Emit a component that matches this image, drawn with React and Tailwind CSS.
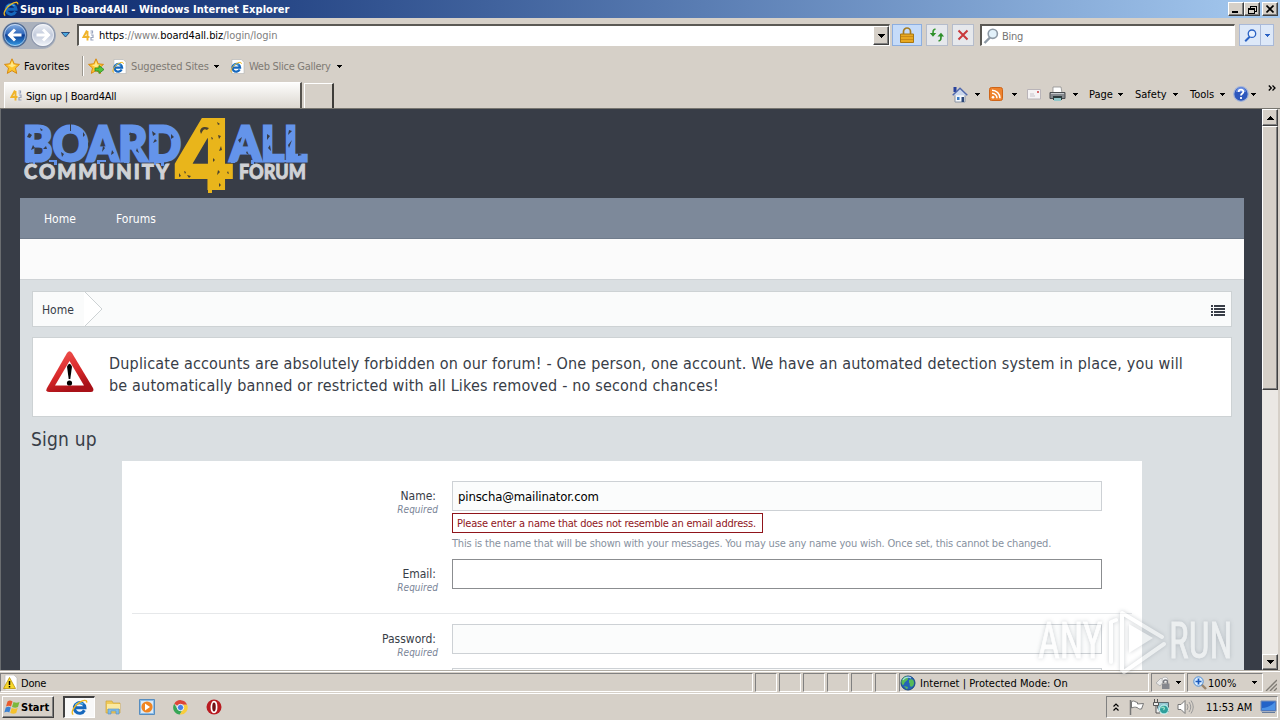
import { clsx } from "clsx";

const sunken = "border border-t-[#808080] border-l-[#808080] border-b-white border-r-white";
const raised =
    "bg-[#d6d0c8] border border-t-white border-l-white border-b-[#404040] border-r-[#404040] shadow-[inset_-1px_-1px_0_#808080]";

function Caret({ className }) {
    return (
        <svg className={clsx("shrink-0", className)} width="5" height="3" viewBox="0 0 5 3" shapeRendering="crispEdges">
            <path d="M0 0h5v1H4v1H3v1H2V2H1V1H0z" fill="currentColor" />
        </svg>
    );
}

function Arrow({ up }) {
    return (
        <svg width="7" height="4" viewBox="0 0 7 4" shapeRendering="crispEdges">
            <path d={up ? "M3 0h1v1h1v1h1v1h1v1H0V3h1V2h1V1h1z" : "M0 0h7v1H6v1H5v1H4v1H3V3H2V2H1V1H0z"} fill="#000" />
        </svg>
    );
}

function IeIcon({ size = 16, page }) {
    return (
        <svg className="shrink-0" width={size} height={size} viewBox="0 0 16 16">
            {page && <path d="M2 .5h10l3 3v12H2z" fill="#fff" stroke="#b4b4b4" strokeWidth=".7" />}
            <g transform={page ? "translate(0 2.5) scale(.82)" : undefined}>
                <path d="M12.6 10.6a5 5 0 1 1 .5-2.4H4.4" fill="none" stroke="#1668bd" strokeWidth="2.9" />
                <path d="M4 5.6a5 5 0 0 1 7.5-.7" fill="none" stroke="#55b7ee" strokeWidth="1.2" />
                <path d="M2.2 14.6C-.8 13 3 6.500 8 3.200 11.500.9 15.300.3 14.700 3.400" fill="none" stroke="#efb81e" strokeWidth="1.3" />
            </g>
        </svg>
    );
}

function SiteIcon() {
    return (
        <svg className="shrink-0" width="13" height="13" viewBox="0 0 13 13">
            <path d="M5 1.500 1.500 8H7.500M5.500 2v9.500" fill="none" stroke="#f0b429" strokeWidth="1.900" />
            <path d="M8.500 2h2v2h-2M9 6h2v2.500H9V11h2.500" fill="none" stroke="#9aa4bd" strokeWidth="1.200" />
        </svg>
    );
}

function Star({ add }) {
    return (
        <svg className="shrink-0" width="17" height="17" viewBox="0 0 17 17">
            <path d="m8 .8 2.200 5 5.300.6-4 3.600 1.200 5.400L8 12.600l-4.700 2.800L4.500 10l-4-3.600 5.300-.6z" fill="#fdc52c" stroke="#d78a13" />
            <path d="m8 3 1.300 3.600 3 .4L8 9.500 3.800 7l3-.4z" fill="#ffe88a" />
            {add && <path d="M7 10h4V7.500l5 4-5 4V13H7z" fill="#54c43b" stroke="#2b8c22" strokeWidth=".8" />}
        </svg>
    );
}

function NavCircle({ forward }) {
    return (
        <svg width="26" height="26" viewBox="0 0 26 26">
            <defs>
                <linearGradient id="navBack" x2="0" y2="1">
                    <stop offset="0" stopColor="#8db4e6" />
                    <stop offset=".45" stopColor="#2f68bb" />
                    <stop offset=".5" stopColor="#0b3c92" />
                    <stop offset="1" stopColor="#38a2ea" />
                </linearGradient>
                <linearGradient id="navForward" x2="0" y2="1">
                    <stop offset="0" stopColor="#eef1f7" />
                    <stop offset=".5" stopColor="#c3cbdc" />
                    <stop offset="1" stopColor="#f5f8fc" />
                </linearGradient>
            </defs>
            <circle cx="13" cy="13" r="11.700" fill={forward ? "url(#navForward)" : "url(#navBack)"} stroke={forward ? "#8f99ad" : "#50698f"} strokeWidth="1.200" />
            <circle cx="13" cy="13" r="10.500" fill="none" stroke="#fff" strokeOpacity=".55" />
            <path
                d={forward ? "M6.500 13h12M13 7.500l5.500 5.500-5.500 5.500" : "M19.500 13h-12M13 7.500 7.500 13l5.500 5.500"}
                fill="none"
                stroke="#fff"
                strokeWidth="3"
            />
        </svg>
    );
}

function Magnifier({ color = "#2a62c4", lens = "#e7f1ff", size = 16 }) {
    return (
        <svg className="shrink-0" width={size} height={size} viewBox="0 0 16 16">
            <path d="M7 9.500 1.500 15" stroke={color} strokeWidth="2.400" />
            <circle cx="9.800" cy="5.800" r="4.600" fill={lens} stroke={color} strokeWidth="1.600" />
        </svg>
    );
}

function TitleBar() {
    return (
        <div className="flex h-[18px] items-center bg-linear-to-r from-[#0a246a] to-[#a6caf0] pr-[2px] pl-[3px]">
            <IeIcon />
            <span className="ml-[1px] flex-1 pt-[2px] text-[11px] font-bold tracking-[0.04px] text-white">
                Sign up | Board4All - Windows Internet Explorer
            </span>
            <div className="flex text-black">
                <span className={clsx(raised, "flex h-[14px] w-4 items-end justify-center pb-[2px]")}>
                    <i className="mr-[2px] h-[2px] w-[6px] bg-black" />
                </span>
                <span className={clsx(raised, "mr-[2px] flex h-[14px] w-4 items-center justify-center")}>
                    <svg width="9" height="9" viewBox="0 0 9 9" shapeRendering="crispEdges">
                        <path d="M2.500 3V1h6v5H7M2 1.500h7M.5 3.500h6v5h-6zM0 4h7" fill="none" stroke="#000" />
                    </svg>
                </span>
                <span className={clsx(raised, "flex h-[14px] w-4 items-center justify-center")}>
                    <svg width="8" height="8" viewBox="0 0 8 8">
                        <path d="m.5.500 7 7m0-7-7 7" stroke="#000" strokeWidth="1.600" />
                    </svg>
                </span>
            </div>
        </div>
    );
}

function NavRow() {
    return (
        <div className="flex h-[34px] items-center pl-[2px]">
            <div className="flex h-[27px] w-[54px] items-center justify-between rounded-full bg-[#aab1bd]">
                <NavCircle />
                <NavCircle forward />
            </div>
            <svg className="mr-[7px] ml-[5px]" width="9" height="6" viewBox="0 0 9 6">
                <path d="M.5.500h8L4.500 5z" fill="#4aa7df" stroke="#1f3f70" strokeWidth=".9" />
            </svg>
            <div className="flex h-[22px] w-[813px] items-center border border-t-2 border-l-2 border-t-[#5b5954] border-r-white border-b-white border-l-[#5b5954] bg-white pl-[3px]">
                <SiteIcon />
                <span className="ml-[4px] flex-1 pt-[2px] text-[11px] tracking-[-0.06px] text-[#808080]">
                    <span className="text-black">https</span>://www.<span className="text-black">board4all.biz</span>/login/login
                </span>
                <span className={clsx(raised, "flex h-[19px] w-4 items-center justify-center")}>
                    <Arrow />
                </span>
            </div>
            <span className="ml-[2px] flex h-[22px] w-[30px] items-center justify-center border border-[#8caee0] bg-[#c5dbf9]">
                <svg width="14" height="16" viewBox="0 0 14 16">
                    <path d="M3.500 7V4.500a3.500 3.500 0 0 1 7 0V7" fill="none" stroke="#a57c22" strokeWidth="1.700" />
                    <path d="M.5 7h13v8.500H.5z" fill="#e8a820" stroke="#a87713" />
                    <path d="M1 9.500h12M1 12.500h12" stroke="#c98a18" />
                </svg>
            </span>
            <span className="ml-[4px] flex h-[22px] w-[22px] items-center justify-center border border-[#b5bccb] bg-[#e6e8ec]">
                <svg width="16" height="14" viewBox="0 0 16 14">
                    <path d="M6.500 1C4 1.500 4 3 4 6" fill="none" stroke="#3a9a34" strokeWidth="1.700" />
                    <path d="M.8 5h6.400L4 8.800zM8.500 8.500h6.600L12 4.800z" fill="#2f8f2a" />
                    <path d="M9.500 13c2.500-.5 2.500-2 2.500-5" fill="none" stroke="#2f8f2a" strokeWidth="1.700" />
                </svg>
            </span>
            <span className="ml-[4px] flex h-[22px] w-[22px] items-center justify-center border border-[#b5bccb] bg-[#e6e8ec]">
                <svg width="12" height="12" viewBox="0 0 12 12">
                    <path d="m1.500 1.500 9 9m0-9-9 9" stroke="#c9393c" strokeWidth="2" />
                </svg>
            </span>
            <div className="ml-[6px] flex h-[22px] w-[255px] items-center border border-t-2 border-l-2 border-t-[#5b5954] border-r-white border-b-white border-l-[#5b5954] bg-white pl-[1px]">
                <Magnifier color="#8e9aa6" lens="#e2f1fa" />
                <span className="ml-[3px] pt-[3px] text-[11px] tracking-[-0.3px] text-[#757575]">Bing</span>
            </div>
            <div className="ml-[4px] flex h-[22px] w-[35px] border border-[#a9b9d8] bg-[#dde8f8] text-[#2a62c4]">
                <span className="flex w-[21px] items-center justify-center border-r border-[#a9b9d8]">
                    <Magnifier size={13} />
                </span>
                <span className="flex flex-1 items-center justify-center">
                    <Caret />
                </span>
            </div>
        </div>
    );
}

function FavoritesRow() {
    return (
        <div className="flex h-[28px] items-center pl-[4px] text-[11px]">
            <Star />
            <span className="ml-[3px] w-[58px] pt-[2px] tracking-[0.1px] text-black">Favorites</span>
            <i className="h-5 w-px bg-[#9b978f]" />
            <i className="mr-[4px] h-5 w-px bg-white" />
            <Star add />
            <span className="ml-[7px]">
                <IeIcon page size={15} />
            </span>
            <span className="ml-[4px] w-[83px] pt-[2px] tracking-[-0.15px] whitespace-nowrap text-[#7e7a74]">Suggested Sites</span>
            <Caret />
            <span className="ml-[11px]">
                <IeIcon page size={15} />
            </span>
            <span className="ml-[4px] w-[88px] pt-[2px] tracking-[-0.28px] whitespace-nowrap text-[#7e7a74]">Web Slice Gallery</span>
            <Caret />
        </div>
    );
}

function HouseIcon() {
    return (
        <svg width="16" height="17" viewBox="0 0 16 17">
            <path d="M3 8h10v8H3z" fill="#f4f7fb" stroke="#8a93a3" />
            <path d="M1.500 1h3v5h-3z" fill="#28419c" />
            <path d="m.7 9.200 7.300-7 7.300 7" fill="#ccd8ec" stroke="#5068ac" strokeWidth="1.500" />
            <path d="M5 11h2.500v3H5z" fill="#3c7cc6" />
            <path d="M9.500 11H12v5H9.500z" fill="#2c4778" />
        </svg>
    );
}

function RssIcon() {
    return (
        <svg width="14" height="14" viewBox="0 0 14 14">
            <rect x=".5" y=".5" width="13" height="13" rx="2" fill="#ee822d" stroke="#cf6518" />
            <circle cx="4" cy="10.300" r="1.300" fill="#fff" />
            <path d="M3 6.300a5 5 0 0 1 5 5M3 3.200a8 8 0 0 1 8 8" fill="none" stroke="#fff" strokeWidth="1.500" />
        </svg>
    );
}

function MailIcon() {
    return (
        <svg width="14" height="11" viewBox="0 0 14 11">
            <path d="M.5.500h13v9.500H.5z" fill="#f5f3f4" stroke="#b9b4b8" />
            <path d="M3 5h4M3 7h5" stroke="#c7c3ca" />
            <path d="M10 2h2v2h-2z" fill="#d5696c" />
        </svg>
    );
}

function PrinterIcon() {
    return (
        <svg width="17" height="16" viewBox="0 0 17 16">
            <path d="M4 1h8l1 6H4z" fill="#fff" stroke="#8e8e8e" strokeWidth=".8" />
            <path d="M1 6.500h15v6H1z" fill="#85898e" stroke="#4a4d50" />
            <path d="M4 10h9v4H4z" fill="#2b3b3c" />
            <path d="M5 12h7v3H5z" fill="#92c8cb" />
            <path d="M2 7.500h13" stroke="#c6cacd" />
        </svg>
    );
}

function HelpIcon() {
    return (
        <svg width="16" height="16" viewBox="0 0 16 16">
            <circle cx="8" cy="8" r="7.300" fill="#2d57bd" stroke="#a5b5d8" strokeWidth="1.200" />
            <path d="M3 6a5 5 0 0 1 10 0" fill="#668be0" />
            <path d="M5.700 6c0-3 4.700-3 4.700-.2C10.400 7.500 8 7.500 8 9.500M8 11v2" fill="none" stroke="#fff" strokeWidth="1.800" />
        </svg>
    );
}

function TabRow() {
    return (
        <div className="flex h-[28px] items-end pl-[4px] text-[11px] text-black">
            <div className="flex h-[26px] w-[298px] items-center border-t border-r-2 border-l border-t-white border-r-[#55524d] border-l-white bg-linear-to-b from-[#fdfdfc] to-[#dcd7d0] pl-[5px]">
                <SiteIcon />
                <span className="ml-[3px] pt-[3px] tracking-[-0.22px]">Sign up | Board4All</span>
            </div>
            <div className="ml-[2px] h-[25px] w-[30px] border-t border-r-2 border-l border-t-white border-r-[#3e3c39] border-l-white" />
            <div className="ml-auto flex h-full items-center">
                <span className="w-[23px]"><HouseIcon /></span>
                <span className="w-[14px]"><Caret /></span>
                <span className="w-[23px]"><RssIcon /></span>
                <span className="w-[15px]"><Caret /></span>
                <span className="w-[22px]"><MailIcon /></span>
                <span className="w-[24px]"><PrinterIcon /></span>
                <span className="w-[16px]"><Caret /></span>
                <span className="w-[29px] pt-[2px]">Page</span>
                <span className="w-[17px]"><Caret /></span>
                <span className="w-[38px] pt-[2px]">Safety</span>
                <span className="w-[17px]"><Caret /></span>
                <span className="w-[30px] pt-[2px]">Tools</span>
                <span className="w-[13px]"><Caret /></span>
                <span className="w-[18px]"><HelpIcon /></span>
                <span className="w-[17px]"><Caret /></span>
                <svg className="mr-[4px] mb-[12px]" width="8" height="6" viewBox="0 0 8 6">
                    <path d="m.8.500 2.500 2.500L.8 5.500M4.500.500 7 3 4.500 5.500" fill="none" stroke="#000" strokeWidth="1.300" />
                </svg>
            </div>
        </div>
    );
}

function Logo() {
    return (
        <svg width="306" height="89" viewBox="22 109 306 89">
            <g fontFamily="Lato, sans-serif" fontWeight="900">
                <g fill="#6494ea" stroke="#6494ea" strokeWidth="3" fontSize="48">
                    <text x="23" y="160.500" textLength="158" lengthAdjust="spacingAndGlyphs">BOARD</text>
                    <text x="230" y="160.500" textLength="77" lengthAdjust="spacingAndGlyphs">ALL</text>
                </g>
                <g fill="#d0d2d6" stroke="#d0d2d6" strokeWidth=".9" fontSize="20">
                    <text x="24" y="179" textLength="145" lengthAdjust="spacing">COMMUNITY</text>
                    <text x="239" y="179" textLength="67" lengthAdjust="spacingAndGlyphs">FORUM</text>
                </g>
                <text x="171" y="190" textLength="65" lengthAdjust="spacingAndGlyphs" fontFamily="Inter, sans-serif" fontSize="99" fill="#e9b51b">4</text>
            </g>
            <path
                d="M26 160v3h3v-2h4v3h2v-4zM49 160v2h5v3h3v-5zM97 160v4h3v-2h6v-2zM124 160v3h5v-3zM154 160v5h2v-2h5v3h3v-6zM231 160v3h4v-3zM251 160v4h3v-4zM283 160v2h8v-2zM295 160v2h9v-2z"
                fill="#6494ea"
            />
            <path d="M208 185v8h4v-5h4v-3zM218 185v5h7v-5z" fill="#e9b51b" />
            <path
                d="M29 133l3 2-2 3-3-1zM33 145l2 3-4 2zM40 128l3 2-2 1zM43 149l3-3 1 3zM61 152l3 2-2 3zM70 123h1v8h-1zM83 132l2 3-2 2zM88 142l2 2-2 3zM105 148l-3 4 1-6zM112 150l2 3-3 2zM130 132l2 3h-3zM137 148l2 5-3-2zM152 131l4 3-3 2zM155 139l2 2-4 2zM161 149l2 4-3-1zM171 134l3 3-3 2zM238 140l4-3-2 6zM247 151l2 4-3-2zM267 134l3 2-3 4zM270 145l1 6-3-3zM289 130l3 1-4 4zM292 140l-3 8-1-3zM298 153l4 2-4 1z"
                fill="#383d47"
            />
            <path
                d="M200 131c1-4 4-5 9-3l-2 2c-4-2-4 1-6 4zM217 122l3 2-2 1zM218 135l3 1-2 3zM221 146l1 4-3 1zM211 137l2 1-1 2zM179 173l2 3-2 1zM184 171l2 1-1 2zM187 175l4 1-2 2zM213 158l2 2-2 2zM218 170l2 2-3 3zM228 171l1 3-2-1zM219 183l2 2-2 2z"
                fill="#4b4230"
            />
        </svg>
    );
}

function WarningSign() {
    return (
        <svg className="shrink-0" width="50" height="44" viewBox="0 0 50 44">
            <defs>
                <linearGradient id="warn" x2=".4" y2="1">
                    <stop offset="0" stopColor="#f45a55" />
                    <stop offset=".6" stopColor="#d92a2b" />
                    <stop offset="1" stopColor="#a91118" />
                </linearGradient>
            </defs>
            <path d="M22 3q2.500-3.500 5 0l21 35q1.500 3.800-2 4H4q-4-.2-2-4z" fill="url(#warn)" />
            <path d="M24.500 11 10 35.500h29z" fill="#fff" />
            <path d="M22 16.500q2.500-5.500 5 0L25.300 29h-1.600z" fill="#000" />
            <circle cx="24.500" cy="33" r="2.600" fill="#000" />
        </svg>
    );
}

function Field({ label, className, inputClass, value, children }) {
    return (
        <div className={clsx("flex", className)}>
            <div className="w-[316px] shrink-0 pt-[8px] text-right">
                <div className="pr-[2px] text-[12px] leading-[14px] text-[#383d47]">{label}:</div>
                <div className="text-[10px] leading-[13px] text-[#7a8597] italic">Required</div>
            </div>
            <div className="ml-[14px] w-[650px]">
                <div className={clsx("flex h-[30px] items-center border pt-[2px] pl-[5px] text-[13px] tracking-[-0.14px] text-black", inputClass)}>
                    {value}
                </div>
                {children}
            </div>
        </div>
    );
}

function Page() {
    return (
        <div className="h-full flex-1 overflow-hidden border-l border-[#6a6d70] bg-[#383d47] pr-[18px] pl-[19px]">
            <div className="h-[89px] pl-[2px]">
                <Logo />
            </div>
            <div className="flex h-[41px] items-center border-b border-[#707c8c] bg-[#7d899a] pt-[2px] pl-6 text-[12px] text-white">
                <span className="w-[72px]">Home</span>
                <span>Forums</span>
            </div>
            <div className="h-[41px] border-b border-[#cfd3d6] bg-[#fbfbfb]" />
            <div className="bg-[#dadfe2] px-3 pt-[11px]">
                <div className="flex h-[36px] items-center border border-[#cdd2d4] bg-[#fafbfb] pl-[9px]">
                    <span className="w-[42px] pt-[2px] text-[12px] text-[#383d47]">Home</span>
                    <svg width="18" height="34" viewBox="0 0 18 34">
                        <path d="M0 0h1l17 17L1 34H0" fill="#fff" />
                        <path d="m1 0 17 17L1 34" fill="none" stroke="#cdd2d4" />
                    </svg>
                    <svg className="mt-[2px] mr-[6px] ml-auto" width="14" height="11" viewBox="0 0 14 11" shapeRendering="crispEdges">
                        <path d="M0 0h2v2H0zm3 0h11v2H3zM0 3h2v2H0zm3 0h11v2H3zM0 6h2v2H0zm3 0h11v2H3zM0 9h2v2H0zm3 0h11v2H3z" fill="#383d47" />
                    </svg>
                </div>
                <div className="mt-[10px] flex h-[80px] border border-[#cdd2d4] bg-white pt-[12px] pl-[12px]">
                    <WarningSign />
                    <p className="ml-[14px] pt-[3px] text-[16px] leading-[22px] tracking-[0.175px] whitespace-nowrap text-[#383d47]">
                        Duplicate accounts are absolutely forbidden on our forum! - One person, one account. We have an automated detection system in place, you will
                        <br />
                        be automatically banned or restricted with all Likes removed - no second chances!
                    </p>
                </div>
                <h1 className="-ml-[1px] h-[44px] pt-[10px] text-[19px] leading-[24px] tracking-[0.2px] text-[#383d47]">Sign up</h1>
                <div className="mx-[90px] h-[220px] bg-white pt-[20px]">
                    <Field label="Name" className="h-[78px]" inputClass="border-[#cdd1d5] bg-[#fbfcfc]" value="pinscha@mailinator.com">
                        <div className="mt-[2px] flex h-[20px] w-[311px] items-center border border-[#90151b] bg-white pt-[2px] pl-[4px] text-[11px] tracking-[-0.21px] whitespace-nowrap text-[#90151b]">
                            Please enter a name that does not resemble an email address.
                        </div>
                        <div className="mt-[4px] text-[11px] leading-[14px] tracking-[-0.185px] whitespace-nowrap text-[#8791a0]">
                            This is the name that will be shown with your messages. You may use any name you wish. Once set, this cannot be changed.
                        </div>
                    </Field>
                    <Field label="Email" className="h-[54px]" inputClass="border-[#8b8d90] bg-white" />
                    <div className="mx-[10px] mb-[10px] h-px bg-[#e6e8ea]" />
                    <Field label="Password" className="h-[44px]" inputClass="border-[#cdd1d5] bg-[#fbfcfc]" />
                    <div className="ml-[330px] h-[30px] w-[650px] border border-[#cdd1d5] bg-[#fbfcfc]" />
                </div>
            </div>
        </div>
    );
}

function ScrollBar() {
    return (
        <div className="mr-[2px] flex w-4 flex-col justify-between bg-[#ebe8e4]">
            <div>
                <div className={clsx(raised, "flex h-[17px] items-center justify-center")}>
                    <Arrow up />
                </div>
                <div className={clsx(raised, "h-[264px]")} />
            </div>
            <div className={clsx(raised, "flex h-[16px] items-center justify-center")}>
                <Arrow />
            </div>
        </div>
    );
}

function StatusBar() {
    return (
        <div className="flex h-[23px] items-center gap-[2px] border-t border-[#b3aea6] pt-px text-[11px] text-black shadow-[inset_0_1px_0_#fff]">
            <div className={clsx(sunken, "flex h-[19px] w-[753px] items-center pl-[2px]")}>
                <svg width="15" height="15" viewBox="0 0 15 15">
                    <path d="M2 0h9l3 3v12H2z" fill="#fff" stroke="#b7b7b7" strokeWidth=".6" />
                    <path d="m6.500 2.500 6 11H.5z" fill="#f8d829" stroke="#b9930a" strokeWidth=".8" />
                    <path d="M6.500 6v4m0 1v1.500" stroke="#000" strokeWidth="1.500" />
                </svg>
                <span className="ml-[3px] pt-[3px] tracking-[-0.2px]">Done</span>
            </div>
            {[1, 2, 3, 4, 5, 6].map((n) => (
                <div key={n} className={clsx(sunken, "h-[19px] w-[22px]")} />
            ))}
            <div className={clsx(sunken, "flex h-[19px] w-[250px] items-center")}>
                <svg width="16" height="16" viewBox="0 0 16 16">
                    <circle cx="8" cy="8" r="7" fill="#2463b7" stroke="#174780" />
                    <path d="M3 3c3-3 6-1 5 1S5 6 4 9 1 8 1.500 6zM9 5c3-2 5 0 5 3s-3 5-4 3 1-2-1-3zM4 11l4 1-1 2.500z" fill="#58bb58" />
                    <path d="M3 5a6 6 0 0 1 8-2" fill="none" stroke="#a8d8f4" strokeWidth="1.300" />
                </svg>
                <span className="ml-[4px] pt-[3px] tracking-[0.03px]">Internet | Protected Mode: On</span>
            </div>
            <div className={clsx(sunken, "flex h-[19px] w-[34px] items-center pl-[3px]")}>
                <svg width="17" height="14" viewBox="0 0 17 14">
                    <path d="m1 7 5-5 3 3-4 5z" fill="#e9e9e9" stroke="#b4b4b4" />
                    <circle cx="10" cy="4" r="3" fill="#f5f5f5" stroke="#bdbdbd" />
                    <path d="M8.500 7V6a2 2 0 0 1 4 0v2" fill="none" stroke="#77797f" strokeWidth="1.400" />
                    <path d="M7 7.500h7.500V13H7z" fill="#85878d" />
                </svg>
                <Caret className="ml-[4px]" />
            </div>
            <div className={clsx(sunken, "flex h-[19px] w-[76px] items-center pl-[5px]")}>
                <svg width="14" height="14" viewBox="0 0 14 14">
                    <path d="m8 8 5 5" stroke="#9a856d" strokeWidth="2.400" />
                    <circle cx="5.500" cy="5.500" r="4.700" fill="#d9ecff" stroke="#4e8cd2" />
                    <path d="M5.500 2.500v6m-3-3h6" stroke="#1b59bb" strokeWidth="1.700" />
                </svg>
                <span className="ml-px w-[44px] pt-[3px]">100%</span>
                <Caret />
            </div>
            <svg className="mt-[5px]" width="12" height="12" viewBox="0 0 12 12">
                <path d="M1 12 12 1M5 12l7-7M9 12l3-3" stroke="#817d76" strokeWidth="1.400" />
            </svg>
        </div>
    );
}

function TaskBar() {
    return (
        <div className="flex h-[27px] items-center border-t border-white pr-[2px] pl-[2px] text-[11px] text-black">
            <div className={clsx(raised, "flex h-[22px] w-[52px] items-center pl-[1px]")}>
                <svg width="17" height="16" viewBox="0 0 17 16">
                    <path d="M3.500 2.500C5.500 1 7 1.500 8.500 2.500L7 7.500C5.500 6.500 4 6.500 2 7.500z" fill="#e95b2d" />
                    <path d="M9.500 3c2 1 4 1 6 0L14 8c-2 1-4 .7-6 0z" fill="#7cb83c" />
                    <path d="M1.800 8.500c2-1 3.500-1 5 0l-1.500 5c-1.500-1-3-1-5 0z" fill="#3c82d2" />
                    <path d="M7.700 9c2 1 4 1 6 0l-1.500 5c-2 1-4 .7-6 0z" fill="#f5c12c" />
                </svg>
                <span className="pt-[2px] text-[11px] font-bold">Start</span>
            </div>
            <div className="ml-[9px] flex h-[22px] w-[32px] items-center justify-center border border-t-2 border-l-2 border-t-[#404040] border-r-white border-b-white border-l-[#404040] bg-[#f8f8f8]">
                <IeIcon size={17} />
            </div>
            <svg className="ml-[10px]" width="17" height="16" viewBox="0 0 17 16">
                <path d="M1 2h6l1 2h7v10H1z" fill="#f0ca58" stroke="#cda53b" strokeWidth=".7" />
                <path d="M2 5h13v5H2z" fill="#fbe9a0" />
                <path d="M3 15v-5h11v5h-3v-3H6v3z" fill="#80bce7" stroke="#568fc2" strokeWidth=".6" />
            </svg>
            <svg className="ml-[17px]" width="16" height="16" viewBox="0 0 16 16">
                <path d="M.5.500h15v15H.5z" fill="#8cbde9" stroke="#578dbf" />
                <path d="M2 2h12v12H2z" fill="#dceaf6" />
                <circle cx="8" cy="8" r="5.600" fill="#f08522" />
                <path d="m6 4.500 5 3.500-5 3.500z" fill="#fff" />
            </svg>
            <svg className="ml-[18px]" width="15" height="15" viewBox="0 0 16 16">
                <path d="M8 8 1.400 4A7.500 7.500 0 0 1 15 5H8z" fill="#dd4538" />
                <path d="M8 8 5 10 1.300 4A7.500 7.500 0 0 0 7.300 15.500L11 9z" fill="#37a655" />
                <path d="M8 5h7A7.500 7.500 0 0 1 7.300 15.500L11 9z" fill="#f8cd3c" />
                <circle cx="8" cy="8" r="3.400" fill="#4580e8" stroke="#fff" />
            </svg>
            <svg className="ml-[18px]" width="16" height="16" viewBox="0 0 16 16">
                <circle cx="8" cy="8" r="7.500" fill="#b91b21" />
                <ellipse cx="8" cy="8" rx="2.600" ry="5.300" fill="#741015" stroke="#fff" strokeWidth="1.700" />
            </svg>
            <div className={clsx(sunken, "ml-auto flex h-[22px] w-[172px] items-center pl-[6px]")}>
                <svg width="6" height="8" viewBox="0 0 6 8">
                    <path d="m.5 3.500 2.500-2.500 2.500 2.500M.5 7.500 3 5l2.500 2.500" fill="none" stroke="#000" strokeWidth="1.200" />
                </svg>
                <svg className="ml-[10px]" width="16" height="16" viewBox="0 0 16 16">
                    <path d="M1.500 1v15" stroke="#777" strokeWidth="1.500" />
                    <path d="M2.500 2.500c3-1.500 4 1 6 1V5l6-.5-2 5.500c-3 .5-3-1-4.500-1.500-2-.5-3-.5-5.500.5z" fill="#fff" stroke="#777" />
                </svg>
                <svg className="ml-[8px]" width="17" height="16" viewBox="0 0 17 16">
                    <path d="M4.500 3.500h11v9h-11z" fill="#8fc5d0" stroke="#5c6b70" />
                    <path d="M1.500 0v3m3-3v3M.5 3.500h5v3h-5zM3 7v7h4" fill="#eee" stroke="#555" />
                    <circle cx="11" cy="10.500" r="4.500" fill="#2f9f9b" stroke="#dff" />
                    <path d="M8.500 9c2-2 4 0 2 2" fill="none" stroke="#a3e4c5" strokeWidth="1.300" />
                </svg>
                <svg className="ml-[7px]" width="17" height="16" viewBox="0 0 17 16">
                    <path d="M1 5.500h3L8 1.500v13l-4-4H1z" fill="#fff" stroke="#777" />
                    <path d="M10 5q2 3 0 6m2-8q3.500 5 0 10m2-11.500q4.500 6.500 0 13" fill="none" stroke="#999" />
                </svg>
                <span className="ml-[12px] pt-[2px] tracking-[-0.1px] whitespace-nowrap">11:53 AM</span>
                <svg className="ml-auto" width="17" height="14" viewBox="0 0 17 14">
                    <path d="M1 1h15v10H1z" fill="#2463c8" stroke="#7b8fb3" />
                    <path d="M2 8c5 0 9-2 13-6v8H2z" fill="#4b91e6" />
                    <path d="M2 12.500h13" stroke="#647a9b" />
                </svg>
            </div>
        </div>
    );
}

function Watermark() {
    return (
        <svg className="absolute top-[604px] left-[1032px] opacity-50 drop-shadow-[0_0_2px_rgba(110,120,130,0.7)]" width="208" height="72" viewBox="0 0 208 72">
            <g fill="#fff" stroke="#fff" strokeWidth=".8" fontFamily="Roboto, sans-serif" fontSize="50">
                <text transform="translate(6 54) scale(.66 1)" textLength="98" lengthAdjust="spacingAndGlyphs">ANY</text>
                <text transform="translate(137 54) scale(.66 1)" textLength="96" lengthAdjust="spacingAndGlyphs">RUN</text>
            </g>
            <g fill="none" stroke="#fff" strokeWidth="4" strokeLinecap="round" strokeLinejoin="round">
                <path d="M79 58V18l5-2M90 66V9l40 24M92 68l40-28" />
            </g>
            <path d="M97 49V20l24 14z" fill="#fff" />
        </svg>
    );
}

export default function App() {
    return (
        <div className="relative flex h-[720px] w-[1280px] flex-col overflow-hidden bg-[#d6d0c8] font-['DejaVu_Sans_Condensed','DejaVu_Sans',sans-serif] [font-stretch:condensed]">
            <TitleBar />
            <NavRow />
            <FavoritesRow />
            <TabRow />
            <div className="flex h-[562px] border-t border-[#77756f]">
                <Page />
                <ScrollBar />
            </div>
            <StatusBar />
            <TaskBar />
            <Watermark />
        </div>
    );
}
